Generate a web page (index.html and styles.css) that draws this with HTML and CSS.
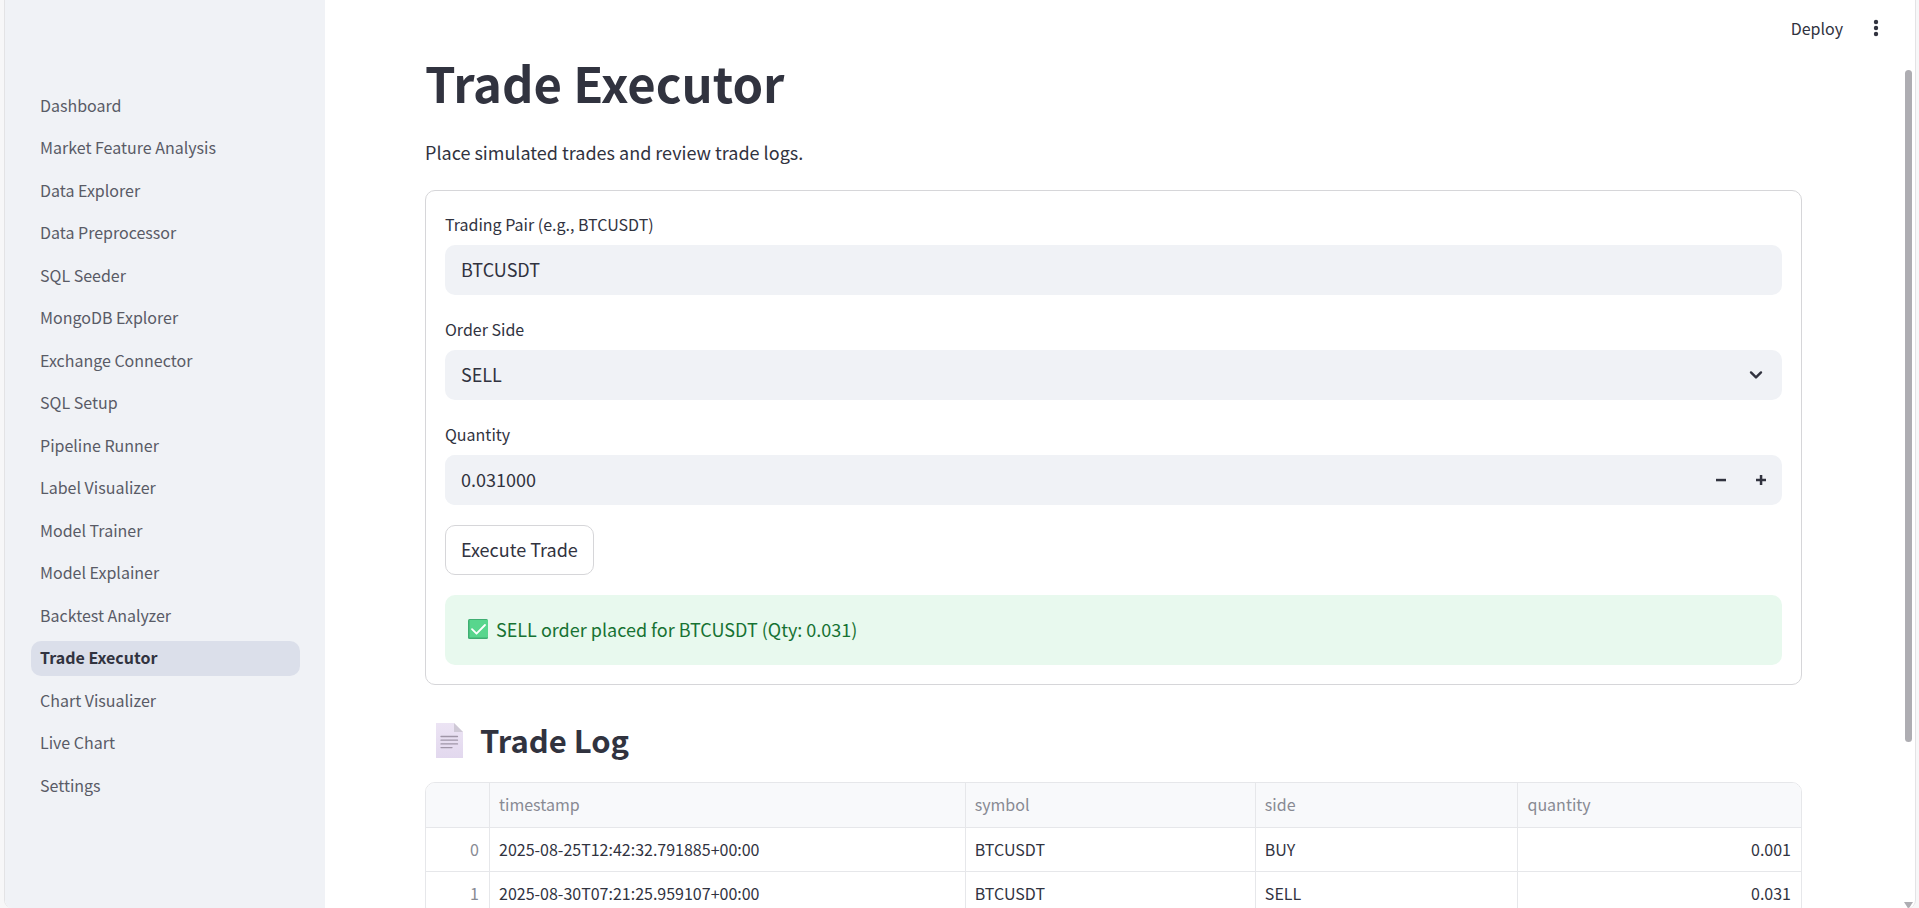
FILE: index.html
```html
<!DOCTYPE html>
<html lang="en">
<head>
<meta charset="utf-8">
<title>Trade Executor</title>
<link rel="stylesheet" href="styles.css">
</head>
<body>
<div class="app">
  <aside class="sidebar">
    <nav aria-label="Pages">
      <ul class="nav">
        <li><a href="#">Dashboard</a></li>
        <li><a href="#">Market Feature Analysis</a></li>
        <li><a href="#">Data Explorer</a></li>
        <li><a href="#">Data Preprocessor</a></li>
        <li><a href="#">SQL Seeder</a></li>
        <li><a href="#">MongoDB Explorer</a></li>
        <li><a href="#">Exchange Connector</a></li>
        <li><a href="#">SQL Setup</a></li>
        <li><a href="#">Pipeline Runner</a></li>
        <li><a href="#">Label Visualizer</a></li>
        <li><a href="#">Model Trainer</a></li>
        <li><a href="#">Model Explainer</a></li>
        <li><a href="#">Backtest Analyzer</a></li>
        <li><a href="#" class="active" aria-current="page">Trade Executor</a></li>
        <li><a href="#">Chart Visualizer</a></li>
        <li><a href="#">Live Chart</a></li>
        <li><a href="#">Settings</a></li>
      </ul>
    </nav>
  </aside>
  <div class="toolbar">
    <button type="button" class="deploy">Deploy</button>
    <button type="button" class="menu" aria-label="Main menu">
      <svg width="6" height="18" viewBox="0 0 6 18" fill="currentColor"><circle cx="3" cy="3" r="2.2"/><circle cx="3" cy="9" r="2.2"/><circle cx="3" cy="15" r="2.2"/></svg>
    </button>
  </div>
  <main class="main">
    <h1>Trade Executor</h1>
    <p class="intro">Place simulated trades and review trade logs.</p>
    <form class="card">
      <div class="field">
        <label for="pair">Trading Pair (e.g., BTCUSDT)</label>
        <input id="pair" class="control" type="text" value="BTCUSDT">
      </div>
      <div class="field">
        <label for="side">Order Side</label>
        <div class="select-wrap">
          <select id="side" class="control"><option>BUY</option><option selected>SELL</option></select>
          <svg class="chevron" width="14" height="10" viewBox="0 0 14 10" fill="none" stroke="currentColor" stroke-width="2.4" stroke-linecap="round" stroke-linejoin="round" aria-hidden="true"><path d="M2 2.4 7 7.4 12 2.4"/></svg>
        </div>
      </div>
      <div class="field">
        <label for="qty">Quantity</label>
        <div class="stepper">
          <input id="qty" class="control" type="text" inputmode="decimal" value="0.031000">
          <button type="button" aria-label="Decrease"><svg width="10" height="10" viewBox="0 0 10 10" fill="currentColor"><path d="M0 3.8h10v2.5H0z"/></svg></button>
          <button type="button" aria-label="Increase"><svg width="10" height="10" viewBox="0 0 10 10" fill="currentColor"><path d="M3.8 0h2.5v3.8H10v2.5H6.300V10H3.800V6.300H0V3.800h3.800z"/></svg></button>
        </div>
      </div>
      <button type="button" class="execute">Execute Trade</button>
      <div class="alert" role="alert">
        <svg width="20" height="20" viewBox="0 0 20 20" aria-hidden="true"><rect width="20" height="20" rx="1.500" fill="#3fae72"/><path d="M1.500 1H20v17.500H1.500z" fill="#58d68d"/><path d="M4 10.200 8.500 14.700 17 6" fill="none" stroke="#fff" stroke-width="1.800" stroke-linecap="round" stroke-linejoin="round"/></svg>
        <span>SELL order placed for BTCUSDT (Qty: 0.031)</span>
      </div>
    </form>
    <h2>
      <svg width="27" height="35" viewBox="0 0 27 35" aria-hidden="true"><defs><linearGradient id="sheet" x1="0" y1="0" x2="0" y2="1"><stop offset="0" stop-color="#ece4f4"/><stop offset="1" stop-color="#e2d8ee"/></linearGradient></defs><path d="M0 0h18l9 9v26H0z" fill="url(#sheet)"/><path d="M18 0v9h9z" fill="#cfc9d6"/><path d="M5 13.500h16.500M5 17.200h16.500M5 20.900h16.500M5 24.600h11" stroke="#a096a8" stroke-width="1.300" stroke-linecap="round"/></svg>
      <span>Trade Log</span>
    </h2>
    <div class="table-frame">
      <table>
        <colgroup><col class="c-index"><col class="c-time"><col class="c-symbol"><col class="c-side"><col></colgroup>
        <thead>
          <tr><td></td><th scope="col">timestamp</th><th scope="col">symbol</th><th scope="col">side</th><th scope="col">quantity</th></tr>
        </thead>
        <tbody>
          <tr><td class="index">0</td><td>2025-08-25T12:42:32.791885+00:00</td><td>BTCUSDT</td><td>BUY</td><td class="num">0.001</td></tr>
          <tr><td class="index">1</td><td>2025-08-30T07:21:25.959107+00:00</td><td>BTCUSDT</td><td>SELL</td><td class="num">0.031</td></tr>
        </tbody>
      </table>
    </div>
  </main>
  <div class="scrollbar" aria-hidden="true">
    <div class="thumb"></div>
    <svg class="arrow" width="9" height="7" viewBox="0 0 9 7"><path d="M0 0h9L4.500 7z" fill="#aeadb2"/></svg>
  </div>
</div>
</body>
</html>
```
FILE: styles.css
```css
* { box-sizing: border-box; }

body {
  margin: 0;
  background: #f7f7f8;
  color: #31333f;
  font-family: "Source Sans Pro", "Noto Sans CJK SC", sans-serif;
  font-size: 18px;
  line-height: 30px;
}

button, input, select { font: inherit; color: inherit; }
button { cursor: pointer; }
svg { display: block; flex: none; }

.app {
  position: relative;
  display: flex;
  height: 100vh;
  margin: 0 3px 0 4px;
  overflow: hidden;
  background: #fff;
  border: solid #e3e3e5;
  border-width: 0 1px;
  border-radius: 0 0 8px 8px;
}

/* Sidebar */
.sidebar {
  flex: none;
  width: 320px;
  padding: 89px 25px 0 26px;
  background: #f0f2f6;
}
.nav {
  display: flex;
  flex-direction: column;
  gap: 7px;
  margin: 0;
  padding: 0;
  list-style: none;
}
.nav li:nth-child(even) { margin-bottom: 1px; }
.nav a {
  display: block;
  padding: 0 9px 2px;
  border-radius: 10px;
  color: #595b66;
  font-size: 16px;
  line-height: 33px;
  text-decoration: none;
}
.nav .active {
  background: #dbdfea;
  color: #31333f;
  font-weight: 600;
}

/* Toolbar */
.toolbar {
  position: absolute;
  top: 10px;
  right: 26px;
  display: flex;
  gap: 20px;
}
.toolbar button {
  display: flex;
  align-items: center;
  height: 37px;
  padding: 0 0 1px;
  border: 0;
  background: none;
  font-size: 16px;
}
.toolbar .menu {
  justify-content: center;
  width: 26px;
}

/* Main */
.main {
  flex: 1;
  min-width: 0;
  padding: 49px 113px 0 100px;
}
h1 {
  margin: 0;
  font-size: 49px;
  font-weight: 700;
  line-height: 66px;
}
.intro { margin: 22px 0 23px; }

.card {
  display: flex;
  flex-direction: column;
  align-items: stretch;
  gap: 20px;
  padding: 19px;
  border: 1px solid #d6d6d9;
  border-radius: 10px;
}
.field label {
  display: block;
  margin-bottom: 7px;
  font-size: 16px;
  line-height: 28px;
}
.control {
  display: block;
  width: 100%;
  height: 50px;
  padding: 0 16px 2px;
  border: 0;
  border-radius: 10px;
  background: #f0f2f6;
  outline: 0;
}
select.control { appearance: none; }
.select-wrap { position: relative; }
.chevron {
  position: absolute;
  top: 20px;
  right: 19px;
  pointer-events: none;
}
.stepper {
  display: flex;
  border-radius: 10px;
  background: #f0f2f6;
}
.stepper .control {
  flex: 1;
  min-width: 0;
}
.stepper button {
  display: flex;
  align-items: center;
  justify-content: center;
  width: 40px;
  padding: 0;
  border: 0;
  background: none;
}
.stepper button:last-child { margin-right: 1px; }
.execute {
  align-self: flex-start;
  height: 50px;
  padding: 0 15px 2px;
  border: 1px solid #d6d6d9;
  border-radius: 10px;
  background: #fff;
}
.alert {
  display: flex;
  align-items: center;
  gap: 8px;
  padding: 19px 23px 21px;
  border-radius: 10px;
  background: #e8f9ee;
  color: #177233;
}

h2 {
  display: flex;
  align-items: center;
  gap: 17px;
  margin: 34px 0 21px;
  padding-left: 11px;
  font-size: 31px;
  font-weight: 600;
  line-height: 42px;
}

/* Table */
.table-frame {
  overflow: hidden;
  border: 1px solid #e6e7ea;
  border-radius: 10px;
}
table {
  width: 100%;
  border-collapse: separate;
  border-spacing: 0;
  table-layout: fixed;
  font-size: 16px;
}
.c-index { width: 64px; }
.c-time { width: 34.6%; }
.c-symbol { width: 21.1%; }
.c-side { width: 19.1%; }
th, td {
  height: 44px;
  padding: 0 10px 2px 9px;
  border: solid #e6e7ea;
  border-width: 0 1px 1px 0;
  font-weight: 400;
  text-align: left;
}
tr > :last-child { border-right: 0; }
thead th, thead td {
  height: 45px;
  background: #f8f9fb;
  color: #888a93;
}
td.index {
  color: #888a93;
  text-align: right;
}
td.num { text-align: right; }

/* Scrollbar */
.scrollbar {
  position: absolute;
  top: 0;
  right: 0;
  bottom: 0;
  width: 13px;
}
.thumb {
  position: absolute;
  top: 70px;
  right: 3px;
  width: 7px;
  height: 74%;
  border-radius: 4px;
  background: #aeadb2;
}
.arrow {
  position: absolute;
  right: 2px;
  bottom: -1px;
}
```
